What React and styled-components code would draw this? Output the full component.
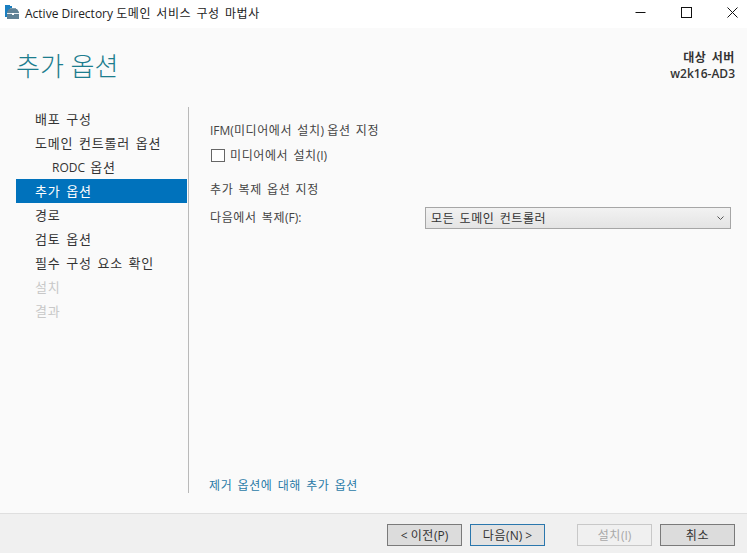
import React from 'react';
import styled, { createGlobalStyle } from 'styled-components';

const GlobalStyle = createGlobalStyle`
  html, body {
    margin: 0;
    padding: 0;
    background: #fafafa;
  }
  * {
    box-sizing: border-box;
  }
`;

const Wizard = styled.div`
  width: 747px;
  height: 553px;
  display: flex;
  flex-direction: column;
  overflow: hidden;
  background: #fafafa;
  color: #333;
  font-family: "Open Sans", "Noto Sans CJK KR", sans-serif;
  font-size: 12px;
`;

// hangul runs sit wider than the latin text around them
const Ko = styled.span`
  font-size: ${p => (p.$large ? 13 : 12)}px;
  letter-spacing: ${p => (p.$large ? 0.8 : 0.6)}px;
  word-spacing: 1.5px;
`;

const TitleBar = styled.div`
  height: 28px;
  flex: none;
  display: flex;
  align-items: center;
  background: #fff;
  padding-left: 5px;
`;

const AppIconSvg = styled.svg`
  flex: none;
  width: 14px;
  height: 14px;
  margin-bottom: 4px;
`;

const TitleText = styled.div`
  margin-left: 6px;
  margin-top: -2px;
  color: #222;
  white-space: nowrap;
`;

const WindowButtons = styled.div`
  margin-left: auto;
  display: flex;
  gap: 16px;
  height: 100%;
`;

const WindowButton = styled.div`
  width: 30px;
  height: 100%;
  display: flex;
  align-items: center;
  justify-content: center;
  padding-bottom: 3px;
`;

const Header = styled.div`
  height: 79px;
  flex: none;
  display: flex;
  justify-content: space-between;
  padding: 20px 12px 0 16px;
`;

const PageTitle = styled.div`
  font-size: 26px;
  line-height: 36px;
  font-weight: 300;
  color: #1c7d8e;
`;

const ServerInfo = styled.div`
  text-align: right;
  font-weight: 600;
  line-height: 16px;
  margin-top: 2px;
  color: #333;
`;

const Body = styled.div`
  flex: 1;
  min-height: 0;
  display: flex;
  padding-bottom: 20px;
`;

const Sidebar = styled.nav`
  width: 189px;
  flex: none;
  padding-left: 16px;
  border-right: 1px solid #b9b9b9;
  padding-right: 1px;
`;

const NavItem = styled.div`
  height: 24px;
  line-height: 25px;
  padding-left: ${p => (p.$sub ? 36 : 19)}px;
  background: ${p => (p.$active ? '#0072bc' : 'transparent')};
  color: ${p => (p.$active ? '#fff' : p.$disabled ? '#c8c8c8' : '#333')};
`;

const NavPrefix = styled.span`
  margin-right: 2px;
`;

const Main = styled.div`
  flex: 1;
  display: flex;
  flex-direction: column;
  padding: 15px 16px 0 21px;
`;

const Label = styled.div`
  line-height: 18px;
  color: #444;
`;

const CheckRow = styled.label`
  display: flex;
  align-items: center;
  gap: 5px;
  margin: 6px 0 0 1px;
  height: 18px;
  color: #444;
`;

const CheckBox = styled.span`
  width: 14px;
  height: 13px;
  border: 1px solid #666;
  background: #fff;
`;

const SectionLabel = styled(Label)`
  margin-top: 17px;
`;

const FieldRow = styled.div`
  display: flex;
  align-items: center;
  justify-content: space-between;
  margin-top: 8px;
`;

const Select = styled.div`
  width: 306px;
  height: 22px;
  display: flex;
  align-items: center;
  justify-content: space-between;
  padding: 0 6px 0 5px;
  border: 1px solid #a6a6a6;
  background: linear-gradient(#f2f2f2, #e4e4e4);
  color: #333;
`;

const MoreLink = styled.a`
  margin-top: auto;
  margin-left: -1px;
  line-height: 18px;
  margin-bottom: -2px;
  color: #2a7aa8;
`;

const Footer = styled.div`
  height: 40px;
  flex: none;
  display: flex;
  align-items: flex-start;
  justify-content: flex-end;
  gap: 8px;
  padding: 10px 12px 0 0;
  background: #f0f0f0;
  border-top: 1px solid #dfdfdf;
`;

const Button = styled.div`
  width: 75px;
  height: 22px;
  display: flex;
  align-items: center;
  justify-content: center;
  border: 1px solid ${p => (p.$primary ? '#2b77ad' : p.$disabled ? '#c8c8c8' : '#7a7a7a')};
  background: ${p => (p.$disabled ? '#f0f0f0' : p.$primary ? '#e2e2e2' : '#dcdcdc')};
  color: ${p => (p.$disabled ? '#a8a8a8' : '#333')};
  margin-left: ${p => (p.$gap ? '24px' : '0')};
`;

const steps = [
  { label: '배포 구성' },
  { label: '도메인 컨트롤러 옵션' },
  { label: '옵션', prefix: 'RODC', sub: true },
  { label: '추가 옵션', active: true },
  { label: '경로' },
  { label: '검토 옵션' },
  { label: '필수 구성 요소 확인' },
  { label: '설치', disabled: true },
  { label: '결과', disabled: true },
];

const AppIcon = () => (
  <AppIconSvg viewBox="0 0 14 14">
    <rect x="0" y="0" width="5" height="12" fill="#1a7fc1" />
    <rect x="5" y="1" width="2" height="2" fill="#1a7fc1" />
    <path d="M2 7 L4 4 H12 L14 7 V14 H2 Z" fill="#5f8195" />
    <rect x="5" y="3" width="6" height="1" fill="#7f9bab" />
    <rect x="2" y="8" width="12" height="1" fill="#e8eef2" />
    <rect x="7" y="8" width="2" height="2" fill="#fff" />
  </AppIconSvg>
);

const App = () => (
  <Wizard>
    <GlobalStyle />
    <TitleBar>
      <AppIcon />
      <TitleText>Active Directory <Ko>도메인 서비스 구성 마법사</Ko></TitleText>
      <WindowButtons>
        <WindowButton>
          <svg width="11" height="11" viewBox="0 0 11 11">
            <path d="M0.5 5.5H10.5" stroke="#111" fill="none" />
          </svg>
        </WindowButton>
        <WindowButton>
          <svg width="11" height="11" viewBox="0 0 11 11">
            <rect x="0.5" y="0.5" width="10" height="10" stroke="#111" fill="none" />
          </svg>
        </WindowButton>
        <WindowButton>
          <svg width="11" height="11" viewBox="0 0 11 11">
            <path d="M0.5 0.5L10.5 10.5M10.5 0.5L0.5 10.5" stroke="#111" fill="none" />
          </svg>
        </WindowButton>
      </WindowButtons>
    </TitleBar>

    <Header>
      <PageTitle>추가 옵션</PageTitle>
      <ServerInfo>
        <div><Ko>대상 서버</Ko></div>
        <div>w2k16-AD3</div>
      </ServerInfo>
    </Header>

    <Body>
      <Sidebar>
        {steps.map(step => (
          <NavItem key={step.label + step.prefix} $sub={step.sub} $active={step.active} $disabled={step.disabled}>
            {step.prefix && <NavPrefix>{step.prefix} </NavPrefix>}
            <Ko $large>{step.label}</Ko>
          </NavItem>
        ))}
      </Sidebar>
      <Main>
        <Label>IFM(<Ko>미디어에서 설치</Ko>) <Ko>옵션 지정</Ko></Label>
        <CheckRow>
          <CheckBox />
          <span><Ko>미디어에서 설치</Ko>(I)</span>
        </CheckRow>
        <SectionLabel><Ko>추가 복제 옵션 지정</Ko></SectionLabel>
        <FieldRow>
          <Label><Ko>다음에서 복제</Ko>(F):</Label>
          <Select>
            <Ko>모든 도메인 컨트롤러</Ko>
            <svg width="7" height="5" viewBox="0 0 7 5">
              <path d="M0.5 0.5L3.5 3.5L6.5 0.5" stroke="#555" fill="none" />
            </svg>
          </Select>
        </FieldRow>
        <MoreLink><Ko>제거 옵션에 대해 추가 옵션</Ko></MoreLink>
      </Main>
    </Body>

    <Footer>
      <Button><span>&lt; <Ko>이전</Ko>(P)</span></Button>
      <Button $primary><span><Ko>다음</Ko>(N) &gt;</span></Button>
      <Button $disabled $gap><span><Ko>설치</Ko>(I)</span></Button>
      <Button><Ko>취소</Ko></Button>
    </Footer>
  </Wizard>
);

export default App;
